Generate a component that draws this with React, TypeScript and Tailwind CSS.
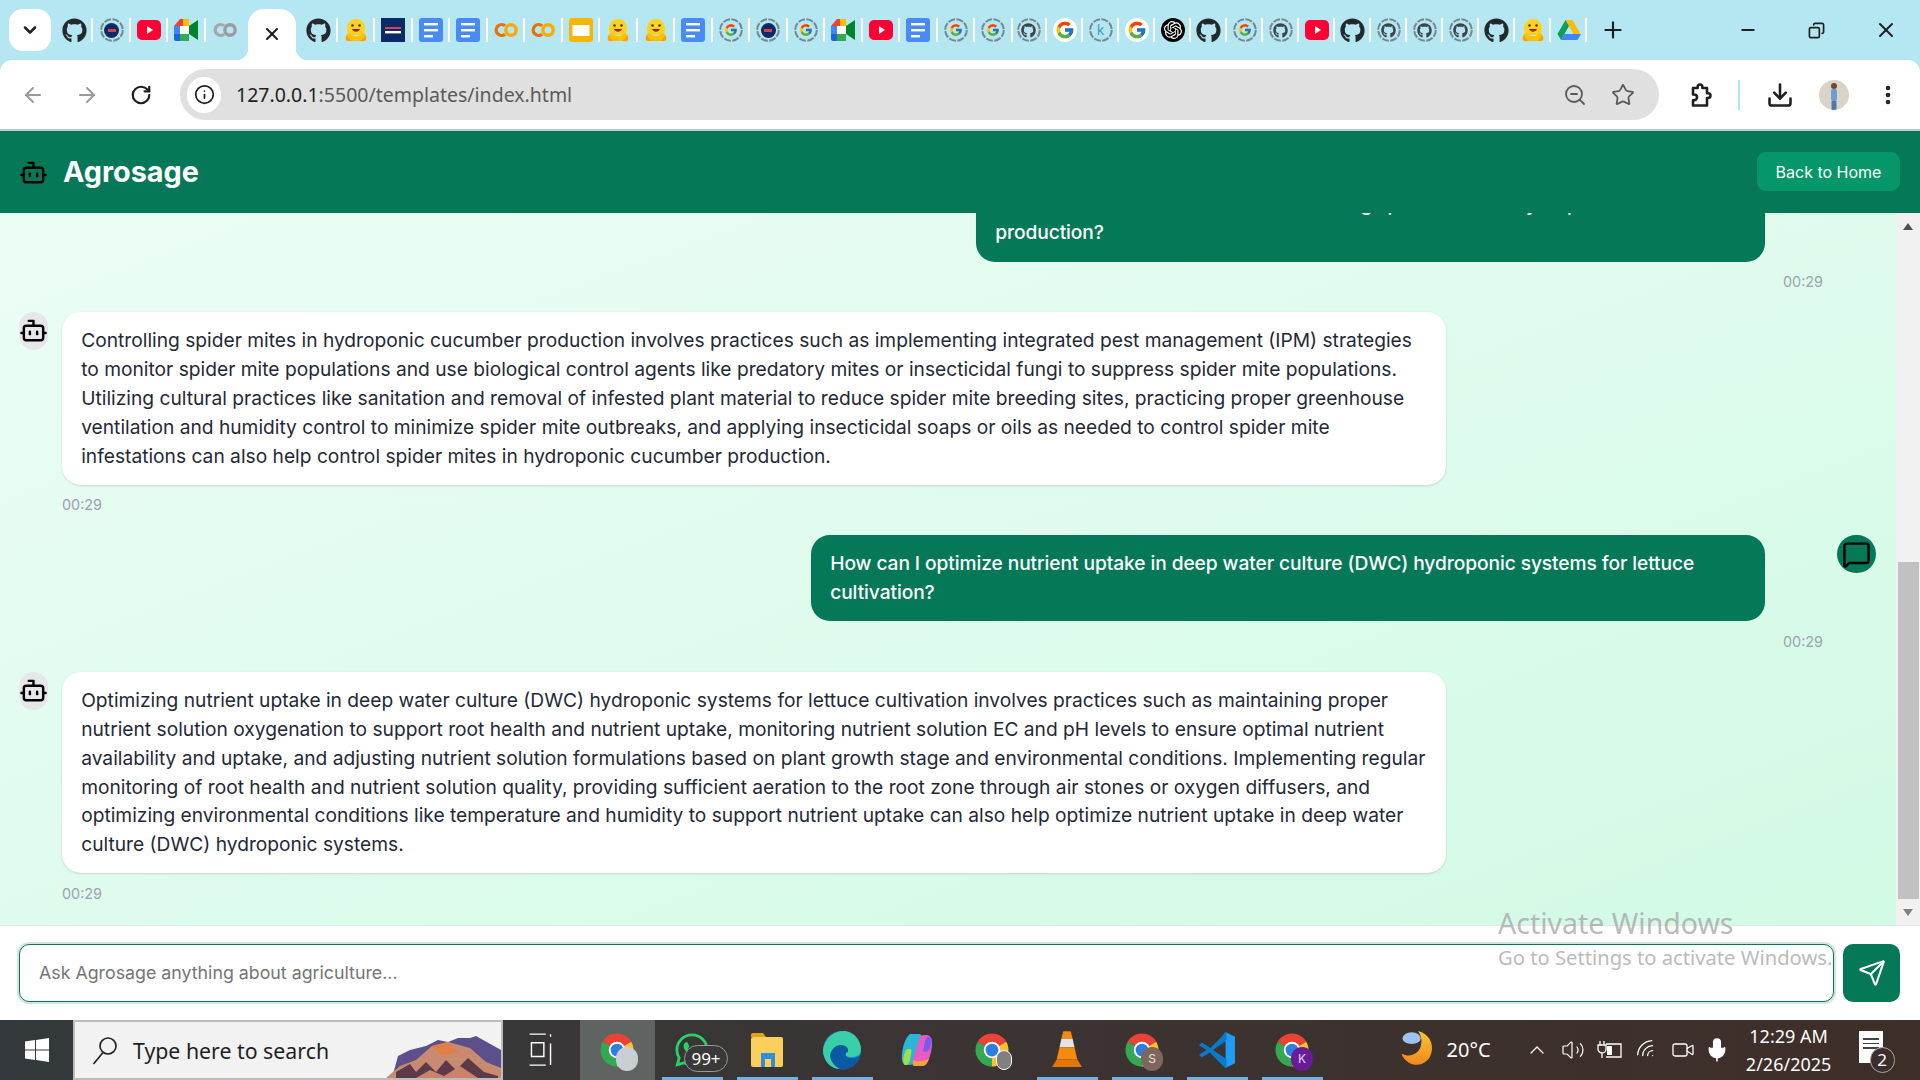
import type { ReactNode } from "react";
import {
  ArrowLeft,
  ArrowRight,
  Bot,
  ChevronDown,
  ChevronUp,
  Copy,
  Download,
  EllipsisVertical,
  Info,
  MessageSquare,
  Mic,
  Minus,
  Plus,
  RotateCw,
  Send,
  Star,
  Video,
  Volume2,
  Wifi,
  X,
  ZoomOut,
} from "lucide-react";
import { FaGithub, FaWhatsapp } from "react-icons/fa";
import { FcGoogle } from "react-icons/fc";
import { SiOpenai } from "react-icons/si";

// tab favicons
function Yt() {
  return (
    <svg viewBox="0 0 24 24" className="w-6 h-6">
      <rect x="0" y="2" width="24" height="20" rx="5" fill="#ff0033" />
      <path d="M10 8l6 4-6 4z" fill="#fff" />
    </svg>
  );
}

function Meet() {
  return (
    <svg viewBox="0 0 24 24" className="w-6 h-6">
      <path d="M6 1h9v7H0z" fill="#ea4335" />
      <path d="M0 8h6v8H0z" fill="#4285f4" />
      <path d="M0 16h6v7H2a2 2 0 0 1-2-2z" fill="#1967d2" />
      <path d="M6 16h9v7H6z" fill="#34a853" />
      <path d="M15 1v7h-6V1z" fill="#fbbc04" />
      <path d="M6 8h9v8H6z" fill="#fff" />
      <path d="M15 8l9-6v20l-9-6z" fill="#00832d" />
    </svg>
  );
}

function Colab({ gray }: { gray?: boolean }) {
  const a = gray ? "#a5a7aa" : "#e8710a";
  const b = gray ? "#9b9da0" : "#f9ab00";
  return (
    <svg viewBox="0 0 24 24" className="w-6 h-6" fill="none">
      <path d="M11 7.800A5.400 5.400 0 1 0 11 16.200" stroke={a} strokeWidth="3.4" />
      <circle cx="17" cy="12" r="5.200" stroke={b} strokeWidth="3.400" />
    </svg>
  );
}

function Docs() {
  return (
    <svg viewBox="0 0 24 24" className="w-6 h-6">
      <rect x="0" y="0" width="24" height="24" rx="3" fill="#4a8af4" />
      <rect x="5" y="5" width="14" height="2.400" fill="#fff" />
      <rect x="5" y="11" width="14" height="2.400" fill="#fff" />
      <rect x="5" y="17" width="9" height="2.400" fill="#fff" />
    </svg>
  );
}

function Slides() {
  return (
    <svg viewBox="0 0 24 24" className="w-6 h-6">
      <rect x="0" y="0" width="24" height="24" rx="3" fill="#f6b704" />
      <rect x="3.500" y="7" width="17" height="11" fill="#fff" />
    </svg>
  );
}

function Hug() {
  return (
    <svg viewBox="0 0 24 24" className="w-6 h-6">
      <path d="M12 1c6 0 9 4.500 9 10 0 3-1 5-2 6l-14 0c-1-1-2-3-2-6 0-5.500 3-10 9-10z" fill="#ffd21e" />
      <path d="M5 15c-3 1-4 5-3 7 1 1.500 3 1.500 5 1l10 0c2 .500 4 .500 5-1 1-2 0-6-3-7-2 1-3 3-7 3s-5-2-7-3z" fill="#ffc107" />
      <path d="M3 17c1 3 3 5 5 6H4c-2 0-3-3-1-6zM21 17c-1 3-3 5-5 6h4c2 0 3-3 1-6z" fill="#ff9d0b" />
      <circle cx="8.500" cy="7.500" r="1.300" fill="#3a3b45" />
      <circle cx="15.500" cy="7.500" r="1.300" fill="#3a3b45" />
      <path d="M8 11c1.500 3.500 6.500 3.500 8 0z" fill="#a3202d" />
    </svg>
  );
}

function AluSquare() {
  return (
    <svg viewBox="0 0 24 24" className="w-6 h-6">
      <rect x="0" y="0" width="24" height="24" fill="#0b2a66" />
      <rect x="4" y="9" width="16" height="2" fill="#d8404a" />
      <rect x="4" y="13" width="16" height="2.400" fill="#fff" />
    </svg>
  );
}

function Ring({ children }: { children: ReactNode }) {
  return (
    <div className="relative w-6 h-6 flex items-center justify-center">
      <svg viewBox="0 0 24 24" className="absolute inset-0 w-6 h-6" fill="none">
        <circle cx="12" cy="12" r="10.800" stroke="#76878f" strokeWidth="2" strokeDasharray="7 1.500" />
      </svg>
      {children}
    </div>
  );
}

function RingG() {
  return (
    <Ring>
      <FcGoogle size={14} />
    </Ring>
  );
}

function RingHub() {
  return (
    <Ring>
      <FaGithub size={15} className="text-[#3d4549]" />
    </Ring>
  );
}

function RingAlu() {
  return (
    <Ring>
      <div className="w-[15px] h-[15px] rounded-full bg-[#0b2a66] flex items-center justify-center">
        <div className="w-2 h-[3px] bg-[#d8404a]" />
      </div>
    </Ring>
  );
}

function RingK() {
  return (
    <Ring>
      <span className="text-[14px] leading-none text-[#2a9dc4] font-['Open_Sans',sans-serif]">k</span>
    </Ring>
  );
}

function GoogleG() {
  return (
    <div className="w-6 h-6 rounded-full bg-white flex items-center justify-center">
      <FcGoogle size={20} />
    </div>
  );
}

function OpenAi() {
  return (
    <div className="w-6 h-6 rounded-full bg-black flex items-center justify-center">
      <SiOpenai size={18} className="text-white" />
    </div>
  );
}

function Hub() {
  return <FaGithub size={25} className="text-[#24292e]" />;
}

function Drive() {
  return (
    <svg viewBox="0 0 24 24" className="w-6 h-6">
      <path d="M8.500 2h7l8 14h-7z" fill="#fbbc04" />
      <path d="M8.500 2l-8 14 3.500 6 8-14z" fill="#0f9d58" />
      <path d="M4 22l3.500-6h16.500l-3.500 6z" fill="#4285f4" />
    </svg>
  );
}

function Tab({ children, last }: { children: ReactNode; last?: boolean }) {
  return (
    <div className="flex-1 flex items-center justify-between pl-[1px]">
      <div className="flex-1 flex items-center justify-center">{children}</div>
      {!last && <div className="w-[2px] h-6 bg-white" />}
    </div>
  );
}

const firstTabs = [<Hub />, <RingAlu />, <Yt />, <Meet />, <Colab gray />];
const middleTabs = [
  <Hub />, <Hug />, <AluSquare />, <Docs />, <Docs />, <Colab />, <Colab />, <Slides />,
  <Hug />, <Hug />, <Docs />, <RingG />, <RingAlu />, <RingG />, <Meet />, <Yt />, <Docs />,
  <RingG />, <RingG />,
];
const lastTabs = [
  <RingHub />, <GoogleG />, <RingK />, <GoogleG />, <OpenAi />, <Hub />, <RingG />, <RingHub />,
  <Yt />, <Hub />, <RingHub />, <RingHub />, <RingHub />, <Hub />, <Hug />, <Drive />,
];

function TabStrip() {
  return (
    <div className="h-[60px] flex items-center shrink-0">
      <div className="ml-[9px] w-[42px] h-[42px] rounded-[14px] bg-white flex items-center justify-center">
        <ChevronDown size={20} strokeWidth={3} className="text-[#1f1f1f]" />
      </div>
      <div className="ml-[5px] w-[187px] flex items-center">
        {firstTabs.map((t, i) => (
          <Tab key={i} last={i === firstTabs.length - 1}>{t}</Tab>
        ))}
      </div>
      <div className="relative ml-[5px] w-[48px] h-[51px] mt-[9px] bg-white rounded-t-[16px] flex items-center justify-center">
        <X size={20} strokeWidth={2.5} className="text-[#1f1f1f] -mt-[1px]" />
        <div className="absolute bottom-0 -left-3 w-3 h-3 bg-[radial-gradient(circle_at_0_0,#b5e7f3_12px,#ffffff_12.5px)]" />
        <div className="absolute bottom-0 -right-3 w-3 h-3 bg-[radial-gradient(circle_at_100%_0,#b5e7f3_12px,#ffffff_12.5px)]" />
      </div>
      <div className="ml-[4px] w-[712.500px] flex items-center">
        {middleTabs.map((t, i) => (
          <Tab key={i}>{t}</Tab>
        ))}
      </div>
      <div className="-ml-[1.500px] w-[576px] flex items-center">
        {lastTabs.map((t, i) => (
          <Tab key={i}>{t}</Tab>
        ))}
      </div>
      <Plus size={26} strokeWidth={2} className="ml-[13px] text-[#1f1f1f]" />
      <div className="ml-auto flex items-center text-[#1f1f1f]">
        <div className="w-[68.500px] flex justify-center">
          <Minus size={20} strokeWidth={2.2} />
        </div>
        <div className="w-[68.500px] flex justify-center">
          <Copy size={17} strokeWidth={2.4} className="-scale-x-100" />
        </div>
        <div className="w-[69px] flex justify-center">
          <X size={24} strokeWidth={2} />
        </div>
      </div>
    </div>
  );
}

function ToolBar() {
  return (
    <div className="h-[69px] shrink-0 bg-white rounded-t-[12px] flex items-center">
      <div className="ml-[6px] w-[54px] flex justify-center">
        <ArrowLeft size={24} className="text-[#9a9a9a]" />
      </div>
      <div className="w-[54px] flex justify-center">
        <ArrowRight size={24} className="text-[#9a9a9a]" />
      </div>
      <div className="w-[54px] flex justify-center">
        <RotateCw size={22} strokeWidth={2.4} className="text-[#1f1f1f]" />
      </div>
      <div className="ml-[12px] w-[1479px] h-[51px] rounded-full bg-[#e0e0e0] flex items-center">
        <div className="ml-[7px] w-[34px] h-[36px] rounded-full bg-white flex items-center justify-center">
          <Info size={21} strokeWidth={2} className="text-[#1f1f1f]" />
        </div>
        <div className="ml-[15px] text-[19.500px] font-['Noto_Sans',sans-serif] text-[#5a5a5a]">
          <span className="text-[#1f1f1f]">127.0.0.1</span>:5500/templates/index.html
        </div>
        <div className="ml-auto mr-[24px] flex items-center gap-6 text-[#5a5a5a]">
          <ZoomOut size={24} strokeWidth={1.8} />
          <Star size={24} strokeWidth={1.8} />
        </div>
      </div>
      <div className="ml-[21px] w-10 flex justify-center">
        <svg viewBox="0 0 24 24" className="w-7 h-7" fill="none" stroke="#1f1f1f" strokeWidth="2.200" strokeLinejoin="round">
          <path d="M6 6h4v-1a2 2 0 0 1 4 0v1h4v4.500h1a2 2 0 0 1 0 4h-1V21H6v-4.500h1a2.500 2.500 0 0 0 0-5H6z" />
        </svg>
      </div>
      <div className="ml-[18px] w-[2px] h-[30px] bg-[#b5e7f3]" />
      <div className="ml-[20px] w-10 flex justify-center">
        <Download size={28} strokeWidth={2.2} className="text-[#1f1f1f]" />
      </div>
      <div className="ml-[19px] w-[30px] h-[30px] rounded-full bg-[#d9d3c8] overflow-hidden flex justify-center">
        <svg viewBox="0 0 30 30" className="w-[30px] h-[30px]">
          <circle cx="15" cy="6" r="3" fill="#6b4a35" />
          <rect x="12" y="9" width="6" height="12" rx="2" fill="#6f9cd0" />
          <rect x="12.500" y="21" width="5" height="9" fill="#4d78ad" />
        </svg>
      </div>
      <div className="ml-[19px] w-10 flex justify-center">
        <EllipsisVertical size={24} strokeWidth={2.6} className="text-[#1f1f1f]" />
      </div>
    </div>
  );
}

function AppHeader() {
  return (
    <div className="h-[82px] shrink-0 bg-[#047857] flex items-center pl-[19px] pr-[20px]">
      <Bot size={29} className="text-black" />
      <h1 className="ml-[15px] text-[28.800px] font-bold text-white">Agrosage</h1>
      <button className="ml-auto mb-[1px] h-[39px] w-[143px] rounded-[9px] bg-[#059669] text-[16px] text-white">
        Back to Home
      </button>
    </div>
  );
}

function BotMessage({ text }: { text: string }) {
  return (
    <div className="flex gap-[14px]">
      <div className="w-[29px] h-[38px] rounded-full bg-[#e5e7eb] flex items-center justify-center shrink-0">
        <Bot size={29} className="text-black shrink-0" />
      </div>
      <div className="flex flex-col">
        <div className="w-[1384px] bg-white rounded-[19px] px-[19.200px] py-[14.400px] text-[19.200px] leading-[28.800px] text-[#1f2937] shadow-sm">
          {text}
        </div>
        <div className="mt-[9.600px] text-[14.400px] leading-[21.600px] text-[#9ca3af]">00:29</div>
      </div>
    </div>
  );
}

function UserMessage({ text, width, avatar }: { text: string; width: string; avatar?: boolean }) {
  return (
    <div className="flex justify-end gap-[14px]">
      <div className="flex flex-col items-end">
        <div className={`${width} mr-[58px] bg-[#047857] rounded-[19px] px-[19.200px] py-[14.400px] text-[19.200px] leading-[28.800px] tracking-[-0.09px] font-medium text-white`}>
          {text}
        </div>
        <div className="mt-[9.600px] text-[14.400px] leading-[21.600px] text-[#9ca3af]">00:29</div>
      </div>
      <div className="w-[39px] h-[38px] rounded-full bg-[#047857] flex items-center justify-center shrink-0">
        {avatar && <MessageSquare size={29} className="text-black" />}
      </div>
    </div>
  );
}

function ChatArea() {
  return (
    <div className="h-[712px] shrink-0 flex overflow-hidden">
      <div className="flex-1 min-w-0 bg-linear-to-br from-[#ecfdf5] to-[#d1fae5] pl-[19px] pr-[20px] flex flex-col gap-[19.200px] overflow-hidden">
        <div className="-mt-[37.800px]">
          <UserMessage
            width="w-[789px]"
            text="What are the best methods for controlling spider mites in hydroponic cucumber production?"
          />
        </div>
        <BotMessage text="Controlling spider mites in hydroponic cucumber production involves practices such as implementing integrated pest management (IPM) strategies to monitor spider mite populations and use biological control agents like predatory mites or insecticidal fungi to suppress spider mite populations. Utilizing cultural practices like sanitation and removal of infested plant material to reduce spider mite breeding sites, practicing proper greenhouse ventilation and humidity control to minimize spider mite outbreaks, and applying insecticidal soaps or oils as needed to control spider mite infestations can also help control spider mites in hydroponic cucumber production." />
        <UserMessage
          avatar
          width="w-[954px]"
          text="How can I optimize nutrient uptake in deep water culture (DWC) hydroponic systems for lettuce cultivation?"
        />
        <BotMessage text="Optimizing nutrient uptake in deep water culture (DWC) hydroponic systems for lettuce cultivation involves practices such as maintaining proper nutrient solution oxygenation to support root health and nutrient uptake, monitoring nutrient solution EC and pH levels to ensure optimal nutrient availability and uptake, and adjusting nutrient solution formulations based on plant growth stage and environmental conditions. Implementing regular monitoring of root health and nutrient solution quality, providing sufficient aeration to the root zone through air stones or oxygen diffusers, and optimizing environmental conditions like temperature and humidity to support nutrient uptake can also help optimize nutrient uptake in deep water culture (DWC) hydroponic systems." />
      </div>
      <div className="w-[24px] shrink-0 bg-[#f1f1f1] flex flex-col items-center">
        <div className="h-[26px] flex items-center justify-center">
          <div className="w-0 h-0 border-x-[5px] border-x-transparent border-b-[7px] border-b-[#505050]" />
        </div>
        <div className="mt-[323px] w-[21px] h-[337px] bg-[#c1c1c1]" />
        <div className="flex-1 flex items-center justify-center">
          <div className="w-0 h-0 border-x-[5px] border-x-transparent border-t-[7px] border-t-[#808080]" />
        </div>
      </div>
    </div>
  );
}

function InputBar() {
  return (
    <div className="relative z-10 h-[95px] shrink-0 bg-white border-t border-[#e5e7eb] flex items-center gap-[9px] pl-[19px] pr-[20px]">
      <input
        readOnly
        placeholder="Ask Agrosage anything about agriculture..."
        className="flex-1 h-[58px] rounded-[10px] border-[1.500px] border-[#047857] ring-2 ring-[#d1e7de] px-[19px] pb-[2px] text-[17.800px] placeholder:text-[#757575] outline-none"
      />
      <button className="w-[57px] h-[58px] rounded-[10px] bg-[#047857] flex items-center justify-center">
        <Send size={28} strokeWidth={1.8} className="text-white" />
      </button>
      <div className="absolute left-[1498px] -top-[24px] font-['Noto_Sans',sans-serif] text-[#a8a8a8]/80 pointer-events-none">
        <div className="text-[28.500px] leading-[42px]">Activate Windows</div>
        <div className="text-[20.200px] leading-[28px] -mb-[2px] mt-[-1px]">Go to Settings to activate Windows.</div>
      </div>
    </div>
  );
}

function Chrome({ badge }: { badge?: ReactNode }) {
  return (
    <div className="relative w-9 h-9">
      <svg viewBox="0 0 48 48" className="w-9 h-9">
        <path d="M24 24L4.950 13A22 22 0 0 1 43.050 13Z" fill="#ea4335" />
        <path d="M24 24L4.950 13A22 22 0 0 0 24 46Z" fill="#34a853" />
        <path d="M24 24L43.050 13A22 22 0 0 1 24 46Z" fill="#fbc02d" />
        <circle cx="24" cy="24" r="11" fill="#fff" />
        <circle cx="24" cy="24" r="8.500" fill="#2f7de1" />
      </svg>
      {badge}
    </div>
  );
}

function Badge({ label, color }: { label: string; color: string }) {
  return (
    <div className={`absolute -right-[3px] -bottom-[3px] w-[22px] h-[24px] rounded-full ${color} text-[12px] text-white/80 flex items-center justify-center`}>
      {label}
    </div>
  );
}

function TaskIcon({ children, open, active }: { children: ReactNode; open?: boolean; active?: boolean }) {
  return (
    <div className={`relative w-[75px] h-full flex items-center justify-center ${active ? "bg-[#5f6362]" : ""}`}>
      {children}
      {open && <div className="absolute bottom-0 left-[7px] right-[7px] h-[3px] bg-[#6fb2ea]" />}
    </div>
  );
}

function TaskBar() {
  return (
    <div className="h-[60px] shrink-0 bg-linear-to-r from-[#33393c] via-[#3b3433] to-[#3e2e28] flex items-center text-white">
      <div className="w-[73px] flex justify-center">
        <svg viewBox="0 0 24 24" className="w-6 h-6 fill-white">
          <path d="M0 3.500l10-1.400v9.400H0zM11 2L24 0v11.500H11zM0 12.500h10v9.400L0 20.500zM11 12.500h13V24l-13-1.900z" />
        </svg>
      </div>
      <div className="relative w-[430px] h-full bg-[#f2f2f2] border-2 border-[#bcbcbc] flex items-center pl-[17px] pt-[2px] overflow-hidden">
        <svg viewBox="0 0 26 30" className="w-[26px] h-[30px]" fill="none" stroke="#1f1f1f" strokeWidth="1.600">
          <circle cx="16" cy="10" r="8" />
          <path d="M11 16.500L1.500 28" />
        </svg>
        <span className="ml-[15px] text-[21.300px] text-[#1f1f1f] font-['Noto_Sans',sans-serif]">Type here to search</span>
        <svg viewBox="0 0 115 42" className="absolute right-0 bottom-0 w-[115px] h-[42px]">
          <path d="M6 42L12 20L24 14L40 10L52 4L62 6L72 2L84 2L90 0L115 14V42z" fill="#5d4f8c" />
          <path d="M0 42L14 30L30 24L46 10L62 6L84 12L100 26L115 32V42z" fill="#c98a72" />
          <path d="M46 10L62 6L72 16L56 20z" fill="#e07f45" />
          <path d="M10 36L24 28L30 36L40 26L50 36L60 24L70 34L82 22L98 36L112 40V42H10z" fill="#5c3a48" />
          <path d="M30 42L44 34L58 40L74 30L92 42z" fill="#c9826b" />
        </svg>
      </div>
      <div className="w-[76.500px] flex justify-center">
        <svg viewBox="0 0 26 44" className="w-[26px] h-[42px]" fill="none" stroke="#fff" strokeWidth="1.500">
          <path d="M1 4h17M1 40h17M3 14h13v16H3zM23 4v3M23 15v25" transform="scale(1 .9) translate(0 2)" />
        </svg>
      </div>
      <TaskIcon active>
        <Chrome badge={<Badge label="" color="bg-[#c9ced3]" />} />
      </TaskIcon>
      <TaskIcon open>
        <div className="relative">
          <FaWhatsapp size={38} className="text-[#25d366]" />
          <div className="absolute -right-[17px] -bottom-[3px] w-[44px] h-[27px] rounded-full border border-[#9a9a9a] bg-[#3a3838] text-[17px] font-['Noto_Sans',sans-serif] leading-none flex items-center justify-center">
            99+
          </div>
        </div>
      </TaskIcon>
      <TaskIcon open>
        <svg viewBox="0 0 32 38" className="w-8 h-[38px]">
          <path d="M0 4a2 2 0 0 1 2-2h10l3 4H0z" fill="#e3a21a" />
          <rect x="0" y="6" width="32" height="30" rx="2" fill="#fbcf5b" />
          <rect x="10" y="22" width="14" height="14" fill="#2f8fdc" />
          <rect x="14" y="28" width="6" height="8" fill="#fbcf5b" />
        </svg>
      </TaskIcon>
      <TaskIcon open>
        <svg viewBox="0 0 38 40" className="w-[38px] h-10">
          <circle cx="19" cy="20" r="19" fill="#1b8ccf" />
          <path d="M0 20C2 6 14 0 22 1c9 1 16 9 16 19 0 5-6 8-12 7-5-1-6-5-4-8-7-2-13 4-9 13 1 3 3 5 6 7C9 40 0 32 0 20z" fill="#38d0a8" />
          <path d="M7 26c1-8 8-13 15-10 4 2 3 5 3 6-4 1-3 6 3 6 4 0 8-1 10-4-2 9-10 16-19 16-3-1-11-6-12-14z" fill="#0c59a4" />
        </svg>
      </TaskIcon>
      <TaskIcon>
        <svg viewBox="0 0 36 38" className="w-8 h-[34px]">
          <path d="M10 1h10c3 0 4 2 3 5L16 30c-1 4-3 6-7 6-6 0-8-3-8-8C1 18 4 6 10 1z" fill="#2bb5d8" />
          <path d="M26 37H16c-3 0-4-2-3-5l7-24c1-4 3-6 7-6 6 0 8 3 8 8 0 10-3 22-9 27z" fill="#e95ac4" />
          <path d="M5 20c2-3 5-3 7-1l-2 12c-1 4-3 5-6 5-3-4-1-12 1-16z" fill="#9be04c" />
          <path d="M32 18c-2 4-5 4-7 2l2-11c1-4 3-5 6-5 3 4 1 10-1 14z" fill="#7a5af0" />
          <path d="M14 30c4 3 12 2 18-2-2 5-4 9-8 9H15c-2 0-2-4-1-7z" fill="#f6a13b" />
        </svg>
      </TaskIcon>
      <TaskIcon>
        <Chrome
          badge={
            <div className="absolute -right-[2px] -bottom-[2px] w-[16px] h-[20px] rounded-full border border-white bg-[#808080]" />
          }
        />
      </TaskIcon>
      <TaskIcon open>
        <svg viewBox="0 0 32 40" className="w-[30px] h-[38px]">
          <path d="M12 0h8l2 8H10z" fill="#f58a0b" />
          <path d="M10 8h12l2 9H8z" fill="#e4e4e4" />
          <path d="M8 17h16l3 13H5z" fill="#f58a0b" />
          <path d="M5 30h22l5 8H0z" fill="#e37607" />
        </svg>
      </TaskIcon>
      <TaskIcon open>
        <Chrome badge={<Badge label="S" color="bg-[#7d675c]" />} />
      </TaskIcon>
      <TaskIcon open>
        <svg viewBox="0 0 38 40" className="w-9 h-[38px]">
          <path d="M28 1l10 5v28l-10 5L13 24z" fill="#1f9cf0" />
          <path d="M28 1v38L11 22z" fill="#0a7bca" />
          <path d="M28 11v18L14 20z" fill="#3c3230" />
          <path d="M3 12l-3 3 8 5-8 5 3 3 9-6 17 17v-9L15 20 29 9V1L12 18z" fill="#0a7bca" />
        </svg>
      </TaskIcon>
      <TaskIcon open>
        <Chrome badge={<Badge label="K" color="bg-[#6a1b9a]" />} />
      </TaskIcon>
      <div className="ml-[71px] flex items-center">
        <svg viewBox="0 0 36 44" className="w-[34px] h-[40px]">
          <defs>
            <linearGradient id="moon" x1="0" y1="0" x2="0" y2="1">
              <stop offset="0" stopColor="#f7c531" />
              <stop offset="1" stopColor="#ef8a1d" />
            </linearGradient>
          </defs>
          <path d="M18 1C30 4 35 14 33 24C31 36 18 42 8 36C4 33 1 30 0 26C8 30 18 28 21 18C23 11 21 5 18 1z" fill="url(#moon)" />
          <ellipse cx="11" cy="9" rx="10" ry="6.500" fill="#9dc3ee" />
        </svg>
        <span className="ml-[12px] text-[20px] font-['Noto_Sans',sans-serif]">20°C</span>
      </div>
      <ChevronUp size={24} strokeWidth={1.3} className="ml-[34px]" />
      <Volume2 size={24} strokeWidth={1.2} className="ml-[12px]" />
      <svg viewBox="0 0 26 24" className="ml-[12px] w-[26px] h-[24px]" fill="none" stroke="#fff" strokeWidth="1.300">
        <path d="M9 6h15v13H9" />
        <path d="M3 3v4M7 3v4M1 7h8v4a4 4 0 0 1-8 0zM5 15v5" />
        <rect x="10" y="8" width="5" height="9" fill="#fff" stroke="none" />
      </svg>
      <Wifi size={24} strokeWidth={1.3} className="ml-[12px] -rotate-45" />
      <Video size={24} strokeWidth={1.3} className="ml-[12px]" />
      <Mic size={26} strokeWidth={1.5} className="ml-[9px] fill-white" />
      <div className="ml-[14px] w-[90px] text-center font-['Noto_Sans',sans-serif] text-[18px] leading-[28px]">
        <div>12:29 AM</div>
        <div>2/26/2025</div>
      </div>
      <div className="relative ml-[25px] w-[24px] h-[36px] -mt-[2px]">
        <div className="w-[24px] h-[32px] bg-white flex flex-col gap-[3px] pt-[7px] px-[4px]">
          <div className="h-[1.500px] bg-[#444]" />
          <div className="h-[1.500px] bg-[#444]" />
          <div className="h-[1.500px] bg-[#444]" />
        </div>
        <div className="absolute -right-[12px] -bottom-[6px] w-[25px] h-[26px] rounded-full border border-[#aaa] bg-[#3a2f2b] text-[17px] font-['Noto_Sans',sans-serif] flex items-center justify-center">
          2
        </div>
      </div>
    </div>
  );
}

export default function App() {
  return (
    <div className="w-full h-screen overflow-hidden flex flex-col bg-[#b5e7f3] font-['Inter',sans-serif]">
      <TabStrip />
      <ToolBar />
      <div className="h-[2px] shrink-0 bg-[#c8c8c8]" />
      <AppHeader />
      <ChatArea />
      <InputBar />
      <TaskBar />
    </div>
  );
}
